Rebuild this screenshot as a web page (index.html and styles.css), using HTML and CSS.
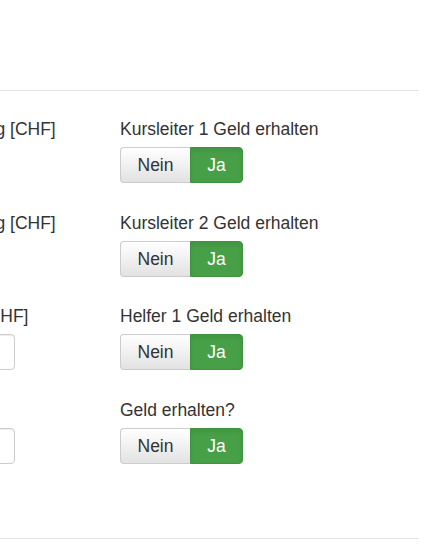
FILE: index.html
```html
<!DOCTYPE html>
<html lang="de">
<head>
<meta charset="utf-8">
<title>Geld erhalten</title>
<link rel="stylesheet" href="styles.css">
</head>
<body>
<div class="page">
  <hr class="rule">
  <div class="form">
    <div class="row">
      <div class="col-left">
        <div class="label">Kursleiter 1 Entschädigung [CHF]</div>
      </div>
      <div class="col-right">
        <div class="label">Kursleiter 1 Geld erhalten</div>
        <div class="toggle"><span class="opt no">Nein</span><span class="opt yes">Ja</span></div>
      </div>
    </div>
    <div class="row">
      <div class="col-left">
        <div class="label">Kursleiter 2 Entschädigung [CHF]</div>
      </div>
      <div class="col-right">
        <div class="label">Kursleiter 2 Geld erhalten</div>
        <div class="toggle"><span class="opt no">Nein</span><span class="opt yes">Ja</span></div>
      </div>
    </div>
    <div class="row">
      <div class="col-left">
        <div class="label">Helfer 1 Entschädigung [CHF]</div>
        <input class="input" type="text">
      </div>
      <div class="col-right">
        <div class="label">Helfer 1 Geld erhalten</div>
        <div class="toggle"><span class="opt no">Nein</span><span class="opt yes">Ja</span></div>
      </div>
    </div>
    <div class="row">
      <div class="col-left">
        <div class="label">Betrag [CHF]</div>
        <input class="input" type="text">
      </div>
      <div class="col-right">
        <div class="label">Geld erhalten?</div>
        <div class="toggle"><span class="opt no">Nein</span><span class="opt yes">Ja</span></div>
      </div>
    </div>
  </div>
  <hr class="rule">
</div>
</body>
</html>
```

FILE: styles.css
```css
html, body {
  margin: 0;
  padding: 0;
  background: #fff;
  overflow: hidden;
}
body {
  font-family: "Liberation Sans", Arial, sans-serif;
  font-size: 17.5px;
  color: #333;
}
.page {
  width: 419px;
  padding-top: 90px;
}
.rule {
  margin: 0;
  border: 0;
  border-top: 1px solid #e3e3e3;
  height: 0;
}
.form {
  padding-top: 26px;
  padding-bottom: 74px;
}
.row {
  display: grid;
  grid-template-columns: 324px auto;
  margin-left: -204px;
  margin-bottom: 27.67px;
}
.row:last-child {
  margin-bottom: 0;
}
.label {
  line-height: 24px;
  height: 24px;
  white-space: nowrap;
  margin-bottom: 6px;
}
.input {
  display: block;
  box-sizing: border-box;
  width: 219px;
  height: 36px;
  margin: 0;
  border: 1px solid #ccc;
  border-radius: 4px;
  background: #fff;
  box-shadow: inset 0 1px 1px rgba(0,0,0,0.075);
}
.toggle {
  display: inline-flex;
  height: 36px;
}
.opt {
  box-sizing: border-box;
  height: 36px;
  line-height: 24px;
  padding: 5px 0;
  text-align: center;
  border: 1px solid #ccc;
}
.no {
  width: 70px;
  border-radius: 4px 0 0 4px;
  border-right: 0;
  background: linear-gradient(to bottom, #fff 0%, #e2e2e2 100%);
  color: #333;
}
.yes {
  width: 53px;
  border-radius: 0 4px 4px 0;
  border-color: #3f923f;
  background: #47a047;
  color: #fff;
  box-shadow: inset 0 3px 5px rgba(0,0,0,0.08);
}
```
